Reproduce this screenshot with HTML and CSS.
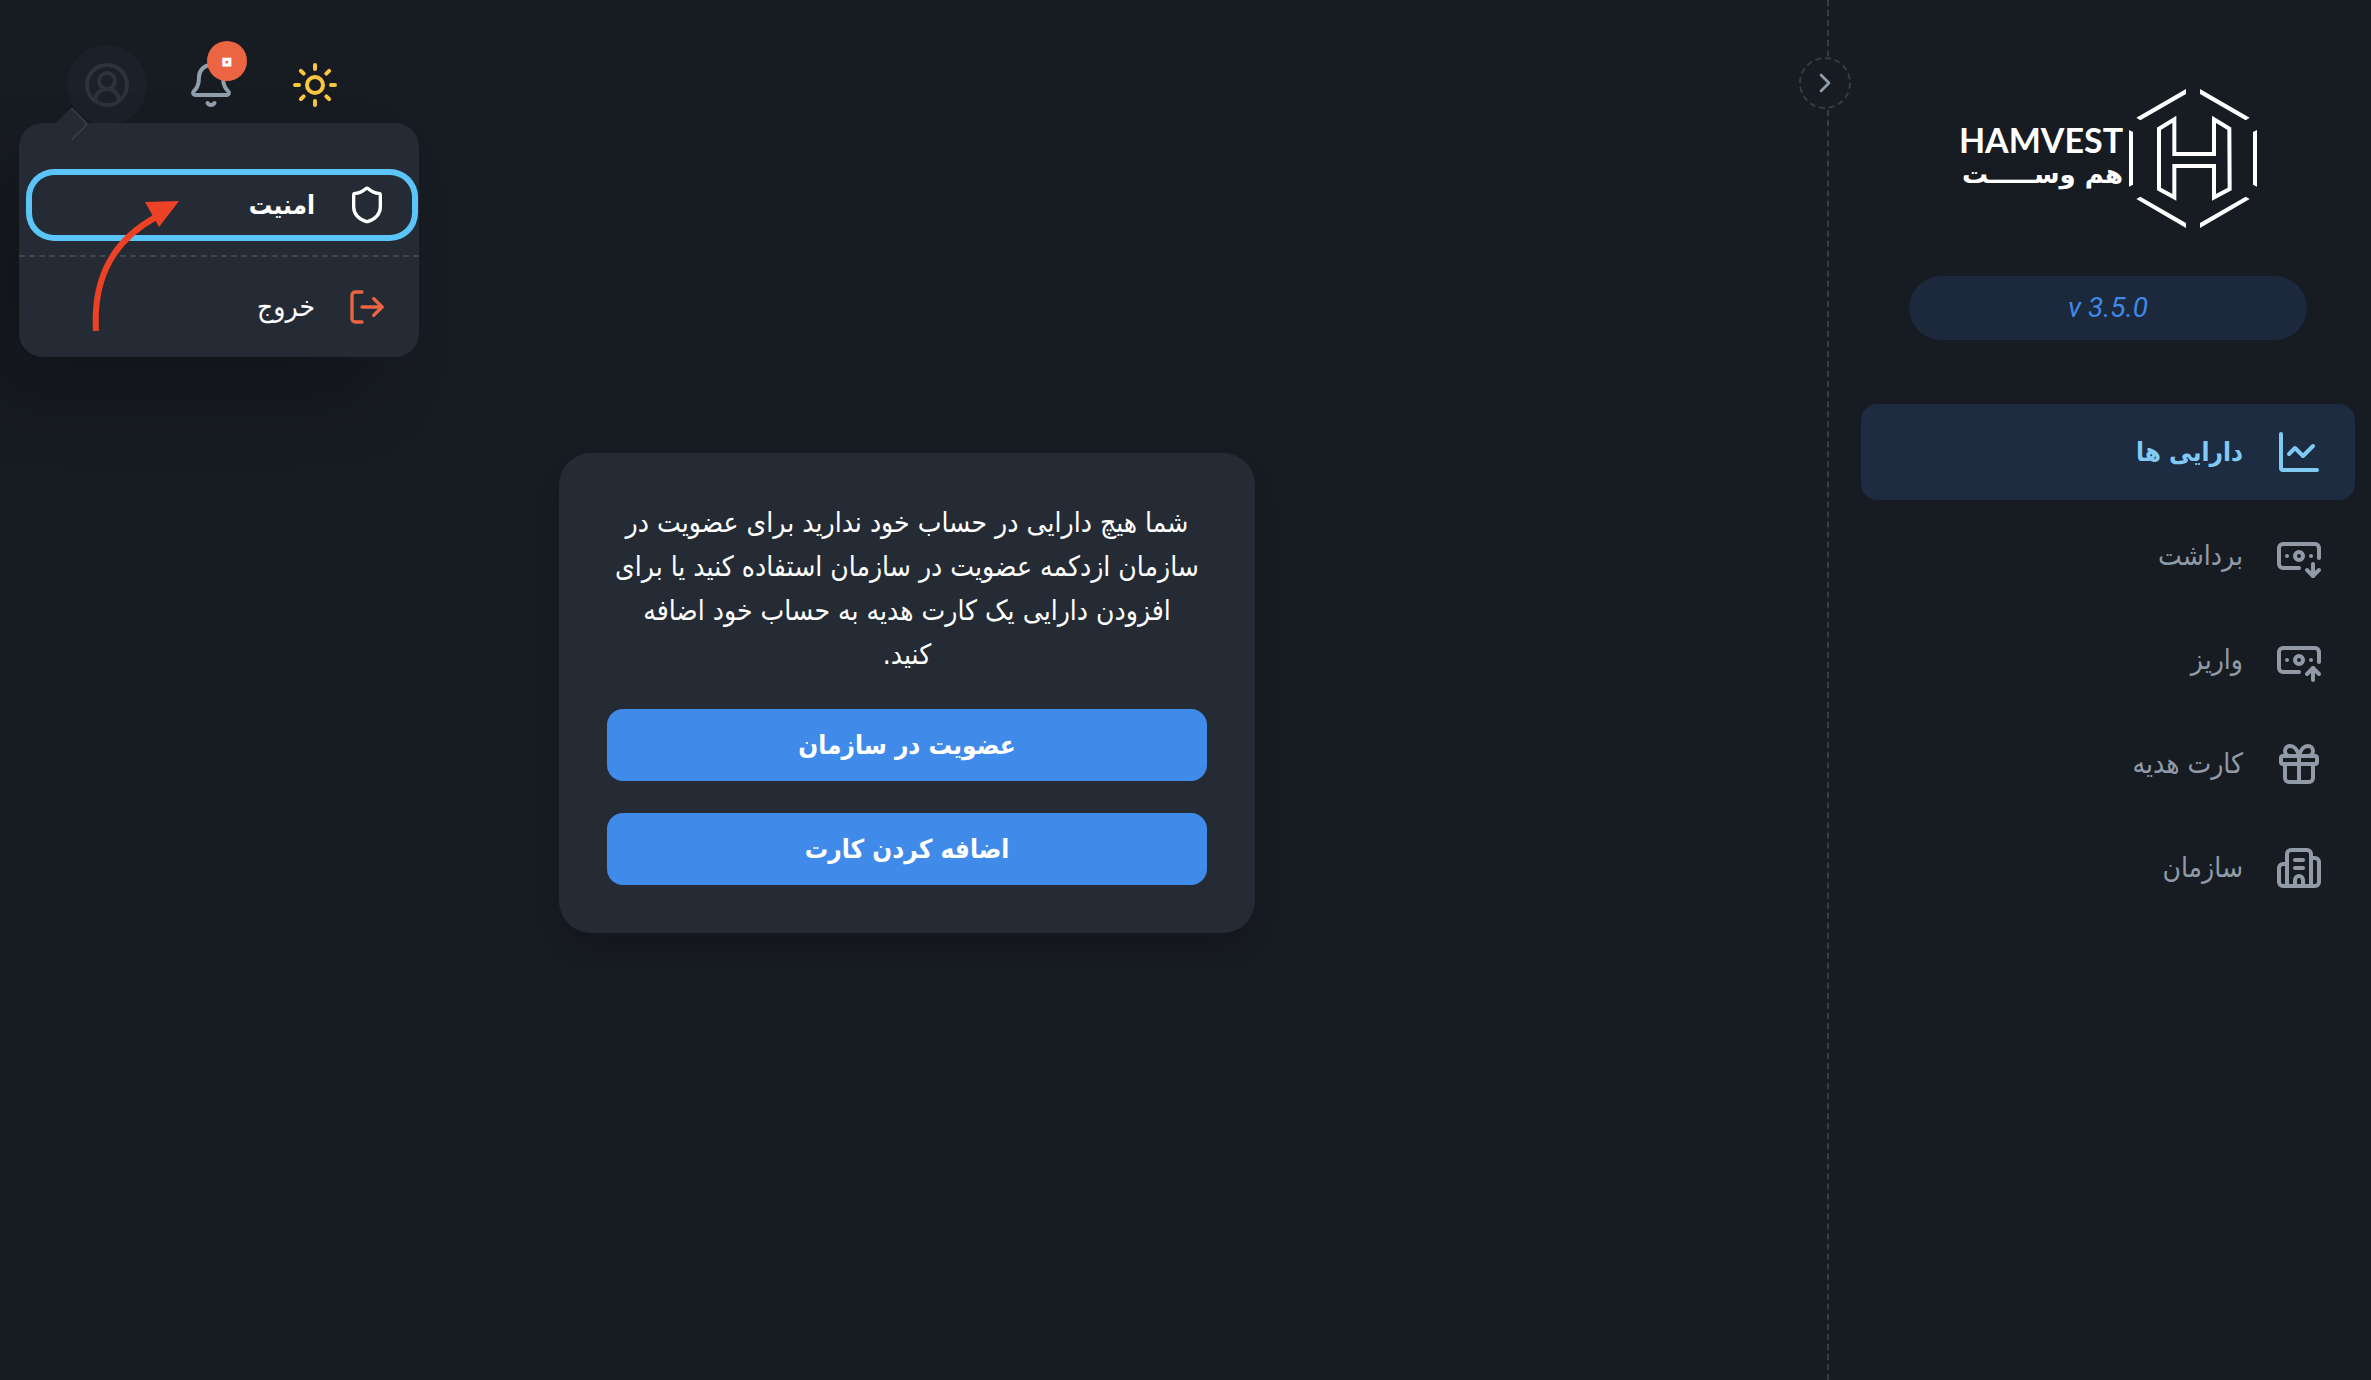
FILE: index.html
```html
<!DOCTYPE html>
<html lang="fa" dir="rtl">
<head>
<meta charset="utf-8">
<meta name="viewport" content="width=device-width, initial-scale=1">
<title>هم وست</title>
<link rel="stylesheet" href="styles.css">
</head>
<body>
<div class="layout">
  <aside class="sidebar">
    <button class="collapse" type="button" aria-label="بستن منو">
      <svg class="collapse-icon" viewBox="0 0 24 24"><path d="m9 6 6 6-6 6"/></svg>
    </button>
    <a class="logo" href="#">
      <svg class="logo-mark" viewBox="600 57 384 417" aria-hidden="true">
        <path class="solid" d="M771 57v15l-137 79-12-8zM813 57v15l137 79 12-8zM600 180l12 6v158l-12 6zM984 180l-12 6v158l12 6zM771 474v-15l-137-79-12 7zM813 474v-15l137-79 12 7z"/>
        <path class="outline" d="M690 176l46-28v104h119V148l46 28 1 181-47 25v-94H736v94l-46-25z"/>
      </svg>
      <span class="wordmark">
        <span class="wordmark-en" dir="ltr">HAMVEST</span>
        <span class="wordmark-fa">هم وســـــت</span>
      </span>
    </a>
    <div class="version" dir="ltr">v 3.5.0</div>
    <nav class="nav">
      <a class="nav-item active" href="#">
        <svg class="icon" viewBox="0 0 24 24"><path d="M3 3v17a1 1 0 0 0 1 1h17"/><path d="m19 9-5 5-4-4-3 3"/></svg>
        <span>دارایی ها</span>
      </a>
      <a class="nav-item" href="#">
        <svg class="icon" viewBox="0 0 24 24"><path d="M12 18H4a2 2 0 0 1-2-2V8a2 2 0 0 1 2-2h16a2 2 0 0 1 2 2v5"/><path d="m16 19 3 3 3-3"/><path d="M18 12h.01"/><path d="M19 16v6"/><path d="M6 12h.01"/><circle cx="12" cy="12" r="2"/></svg>
        <span>برداشت</span>
      </a>
      <a class="nav-item" href="#">
        <svg class="icon" viewBox="0 0 24 24"><path d="M12 18H4a2 2 0 0 1-2-2V8a2 2 0 0 1 2-2h16a2 2 0 0 1 2 2v5"/><path d="M18 12h.01"/><path d="M19 22v-6"/><path d="m22 19-3-3-3 3"/><path d="M6 12h.01"/><circle cx="12" cy="12" r="2"/></svg>
        <span>واریز</span>
      </a>
      <a class="nav-item" href="#">
        <svg class="icon" viewBox="0 0 24 24"><rect x="3" y="8" width="18" height="4" rx="1"/><path d="M12 8v13"/><path d="M19 12v7a2 2 0 0 1-2 2H7a2 2 0 0 1-2-2v-7"/><path d="M7.500 8a2.500 2.500 0 0 1 0-5A4.800 8 0 0 1 12 8a4.800 8 0 0 1 4.500-5 2.500 2.500 0 0 1 0 5"/></svg>
        <span>کارت هدیه</span>
      </a>
      <a class="nav-item" href="#">
        <svg class="icon" viewBox="0 0 24 24"><path d="M10 12h4"/><path d="M10 8h4"/><path d="M14 21v-3a2 2 0 0 0-4 0v3"/><path d="M6 10H4a2 2 0 0 0-2 2v7a2 2 0 0 0 2 2h16a2 2 0 0 0 2-2V9a2 2 0 0 0-2-2h-2"/><path d="M6 21V5a2 2 0 0 1 2-2h8a2 2 0 0 1 2 2v16"/></svg>
        <span>سازمان</span>
      </a>
    </nav>
  </aside>

  <div class="content">
    <header class="topbar">
      <button class="tool sun" type="button" aria-label="حالت روشن">
        <svg class="icon" viewBox="0 0 24 24"><circle cx="12" cy="12" r="4"/><path d="M12 2v2M12 20v2M4.930 4.930l1.410 1.410M17.660 17.660l1.410 1.410M2 12h2M20 12h2M6.340 17.660l-1.410 1.410M19.070 4.930l-1.410 1.410"/></svg>
      </button>
      <button class="tool bell" type="button" aria-label="اعلان ها">
        <svg class="icon" viewBox="0 0 24 24"><path d="M10.268 21a2 2 0 0 0 3.464 0"/><path d="M3.262 15.326A1 1 0 0 0 4 17h16a1 1 0 0 0 .740-1.673C19.410 13.956 18 12.499 18 8A6 6 0 0 0 6 8c0 4.499-1.411 5.956-2.738 7.326"/></svg>
        <span class="badge">۰</span>
      </button>
      <div class="account">
        <button class="tool avatar" type="button" aria-label="حساب کاربری">
          <svg class="icon" viewBox="0 0 24 24"><path d="M18 20a6 6 0 0 0-12 0"/><circle cx="12" cy="10" r="4"/><circle cx="12" cy="12" r="10"/></svg>
        </button>
        <div class="menu">
          <a class="menu-item focused" href="#">
            <svg class="menu-icon" viewBox="0 0 24 24"><path d="M20 13c0 5-3.500 7.500-7.660 8.950a1 1 0 0 1-.670-.010C7.500 20.500 4 18 4 13V6a1 1 0 0 1 1-1c2 0 4.500-1.200 6.240-2.720a1.170 1.170 0 0 1 1.520 0C14.510 3.810 17 5 19 5a1 1 0 0 1 1 1z"/></svg>
            <span>امنیت</span>
          </a>
          <hr class="menu-divider">
          <a class="menu-item" href="#">
            <svg class="menu-icon exit" viewBox="0 0 24 24"><path d="m16 17 5-5-5-5"/><path d="M21 12H9"/><path d="M9 21H5a2 2 0 0 1-2-2V5a2 2 0 0 1 2-2h4"/></svg>
            <span>خروج</span>
          </a>
          <svg class="pointer" viewBox="0 0 90 134" aria-hidden="true"><path class="pointer-line" d="M7 132C4 82 21 43 67 18"/><path class="pointer-head" d="M56 3l34-1-20 26z"/></svg>
        </div>
      </div>
    </header>

    <main class="main">
      <section class="card">
        <p class="card-text">شما هیچ دارایی در حساب خود ندارید برای عضویت در<br>سازمان ازدکمه عضویت در سازمان استفاده کنید یا برای<br>افزودن دارایی یک کارت هدیه به حساب خود اضافه<br>کنید.</p>
        <button class="primary" type="button">عضویت در سازمان</button>
        <button class="primary" type="button">اضافه کردن کارت</button>
      </section>
    </main>
  </div>
</div>
</body>
</html>
```
FILE: styles.css
```css
* {
  box-sizing: border-box;
}

body {
  margin: 0;
  background: #171b22;
  color: #fff;
  font-family: "DejaVu Sans Condensed", "DejaVu Sans", sans-serif;
  font-size: 28px;
  line-height: 44px;
}

a {
  color: inherit;
  text-decoration: none;
}

button {
  border: 0;
  padding: 0;
  background: none;
  color: inherit;
  font: inherit;
  cursor: pointer;
}

svg {
  display: block;
  flex: none;
  fill: none;
  stroke: currentColor;
  stroke-width: 2;
  stroke-linecap: round;
  stroke-linejoin: round;
}

.layout {
  display: flex;
  min-height: 100vh;
}

/* Sidebar */

.sidebar {
  position: relative;
  flex: none;
  width: 544px;
  padding: 89px 16px 32px 32px;
  border-left: 2px dashed #363b44;
}

.collapse {
  position: absolute;
  top: 57px;
  left: -30px;
  display: grid;
  place-items: center;
  width: 52px;
  height: 52px;
  border: 2px dashed #363b44;
  border-radius: 50%;
  background: #171b22;
  color: #919eab;
}

.collapse-icon {
  width: 32px;
  height: 32px;
}

.logo {
  display: flex;
  justify-content: center;
  align-items: center;
  gap: 6px;
}

.logo-mark {
  width: 128px;
  height: 139px;
}

.solid {
  fill: #fff;
  stroke: none;
}

.outline {
  stroke-width: 12;
  stroke-linejoin: miter;
}

.wordmark {
  display: flex;
  flex-direction: column;
  padding-bottom: 4px;
  font-weight: 700;
  line-height: 34px;
}

.wordmark-en {
  font-family: Lato, sans-serif;
  font-size: 34px;
}

.wordmark-fa {
  font-family: "DejaVu Sans", sans-serif;
  font-size: 26px;
}

.version {
  margin: 48px 48px 64px;
  border-radius: 32px;
  background: #1c283b;
  color: #3f8ae8;
  font-family: Roboto, sans-serif;
  font-style: italic;
  line-height: 64px;
  text-align: center;
}

.nav {
  display: flex;
  flex-direction: column;
  gap: 8px;
}

.nav-item {
  display: flex;
  align-items: center;
  gap: 32px;
  height: 96px;
  padding: 0 32px;
  border-radius: 16px;
  color: #919ba8;
}

.nav-item.active {
  background: #1d2c41;
  color: #81caf6;
}

.nav-item.active,
.menu-item.focused,
.primary {
  font-size: 26px;
  font-weight: 700;
}

.icon {
  width: 48px;
  height: 48px;
}

/* Top bar */

.content {
  flex: 1;
  min-width: 0;
}

.topbar {
  display: flex;
  justify-content: flex-end;
  gap: 24px;
  padding: 45px 67px 0;
}

.tool {
  position: relative;
  display: grid;
  place-items: center;
  width: 80px;
  height: 80px;
  border-radius: 50%;
}

.sun {
  color: #fac541;
}

.bell {
  color: #919eab;
}

.badge {
  position: absolute;
  top: -4px;
  right: 4px;
  width: 40px;
  height: 40px;
  border-radius: 50%;
  background: #ec6542;
  color: #ec6542;
  font-family: "DejaVu Sans", sans-serif;
  font-size: 34px;
  font-weight: 700;
  line-height: 38px;
  -webkit-text-stroke: 3px #fff;
}

.account {
  position: relative;
}

.avatar {
  background: #1c2028;
  color: #2e323a;
}

/* Account menu */

.menu {
  position: absolute;
  z-index: 1;
  top: 78px;
  left: -48px;
  width: 400px;
  padding: 46px 0 14px;
  border-radius: 24px;
  background: #242b34;
  box-shadow: -40px 40px 80px -8px rgba(0, 0, 0, 0.24);
}

.menu::before {
  content: "";
  position: absolute;
  top: -11px;
  left: 41px;
  width: 22px;
  height: 22px;
  border: solid #343c46;
  border-width: 2px 2px 0 0;
  border-top-right-radius: 4px;
  background: #242b34;
  transform: rotate(45deg);
}

.menu-item {
  display: flex;
  align-items: center;
  gap: 32px;
  height: 72px;
  margin: 0 1px 0 7px;
  padding: 0 31px;
  border-radius: 28px;
}

.menu-item.focused {
  box-shadow: inset 0 0 0 6px #5bc5fa;
}

.menu-icon {
  width: 40px;
  height: 40px;
}

.exit {
  color: #ec6542;
}

.menu-divider {
  margin: 14px 0;
  border: 0;
  border-top: 2px dashed #3f4650;
}

.pointer {
  position: absolute;
  top: 76px;
  left: 70px;
  width: 90px;
  height: 134px;
}

.pointer-line {
  stroke: #ec4125;
  stroke-width: 6;
  stroke-linecap: butt;
}

.pointer-head {
  fill: #ec4125;
  stroke: none;
}

/* Empty state card */

.main {
  display: flex;
  justify-content: center;
  padding: 328px 13px 48px 0;
}

.card {
  display: flex;
  flex-direction: column;
  gap: 32px;
  width: 696px;
  padding: 48px;
  border-radius: 32px;
  background: #242b34;
  box-shadow: 0 16px 32px -8px rgba(0, 0, 0, 0.2);
}

.card-text {
  margin: 0;
  text-align: center;
}

.primary {
  height: 72px;
  border-radius: 16px;
  background: #408be9;
}
```
